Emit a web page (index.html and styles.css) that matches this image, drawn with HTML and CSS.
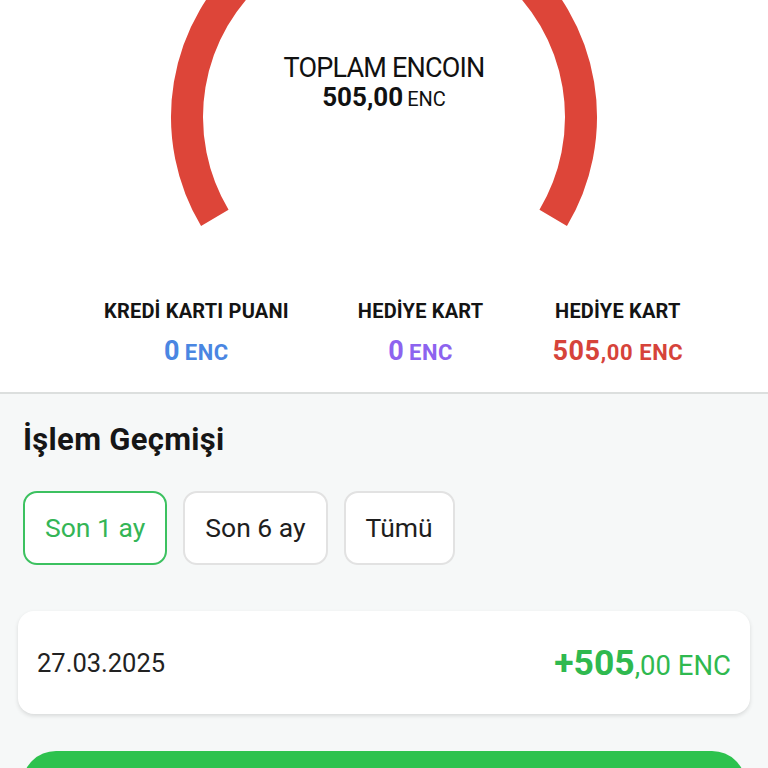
FILE: index.html
```html
<!DOCTYPE html>
<html lang="tr">
<head>
<meta charset="utf-8">
<title>Encoin</title>
<link rel="stylesheet" href="styles.css">
</head>
<body>
<div class="top">
  <div class="gauge">
    <svg class="gauge-svg" viewBox="0 0 768 240" width="768" height="240">
      <path d="M214.8 217.9 A197 197 0 1 1 553.2 217.9" fill="none" stroke="#dd4539" stroke-width="32"/>
    </svg>
    <div class="gauge-text">
      <div class="gauge-title">TOPLAM ENCOIN</div>
      <div class="gauge-value"><span class="gv-num">505,00</span> <span class="gv-unit">ENC</span></div>
    </div>
  </div>
  <div class="stats">
    <div class="stat">
      <div class="stat-label">KREDİ KARTI PUANI</div>
      <div class="stat-value blue"><span class="sv-num">0</span> <span class="sv-unit">ENC</span></div>
    </div>
    <div class="stat">
      <div class="stat-label">HEDİYE KART</div>
      <div class="stat-value purple"><span class="sv-num">0</span> <span class="sv-unit">ENC</span></div>
    </div>
    <div class="stat">
      <div class="stat-label">HEDİYE KART</div>
      <div class="stat-value red"><span class="sv-num">505</span><span class="sv-unit">,00 ENC</span></div>
    </div>
  </div>
</div>
<div class="history">
  <h2 class="history-title">İşlem Geçmişi</h2>
  <div class="chips">
    <button class="chip active">Son 1 ay</button>
    <button class="chip">Son 6 ay</button>
    <button class="chip">Tümü</button>
  </div>
  <div class="tx-card">
    <span class="tx-date">27.03.2025</span>
    <span class="tx-amount"><span class="tx-num">+505</span><span class="tx-rest">,00 ENC</span></span>
  </div>
  <div class="action-btn"></div>
</div>
</body>
</html>
```

FILE: styles.css
```css
* { box-sizing: border-box; }
html, body {
  margin: 0;
  padding: 0;
  font-family: Roboto, "Noto Sans", Arial, sans-serif;
  color: #161616;
  background: #f6f8f8;
}
body { overflow: hidden; }
.top {
  background: #fff;
  border-bottom: 2px solid #dcdfde;
  padding-bottom: 24px;
}
.gauge {
  position: relative;
  height: 300px;
}
.gauge-svg { display: block; }
.gauge-text {
  position: absolute;
  top: 52px;
  left: 0;
  right: 0;
  text-align: center;
  color: #111;
}
.gauge-title {
  font-size: 27px;
  line-height: 32px;
  font-weight: 400;
  letter-spacing: -0.8px;
}
.gauge-value {
  line-height: 31px;
}
.gv-num { font-size: 26px; font-weight: 700; line-height: 1; }
.gv-unit { font-size: 20px; font-weight: 400; line-height: 1; }
.stats {
  display: flex;
  justify-content: flex-start;
  gap: 69px;
  padding-left: 104px;
}
.stat {
  display: flex;
  flex-direction: column;
  align-items: center;
}
.stat-label {
  font-size: 20px;
  line-height: 22px;
  font-weight: 700;
  color: #141414;
  letter-spacing: 0.2px;
}
.stat-value {
  margin-top: 16px;
  height: 30px;
  line-height: 30px;
  font-weight: 700;
  letter-spacing: 0.6px;
}
.sv-num { font-size: 27px; line-height: 1; }
.sv-unit { font-size: 22px; line-height: 1; }
.blue { color: #4a86e2; }
.purple { color: #8d63ef; }
.red { color: #d6433a; }
.history {
  padding: 28px 23px 0;
}
.history-title {
  margin: 0;
  font-size: 31px;
  line-height: 36px;
  font-weight: 700;
  color: #161616;
  letter-spacing: 0.3px;
}
.chips {
  display: flex;
  gap: 16px;
  margin-top: 33px;
}
.chip {
  font-family: inherit;
  font-size: 26.5px;
  line-height: 30px;
  padding: 20px 20px;
  background: #fff;
  border: 2px solid #e2e2e2;
  border-radius: 14px;
  color: #1e1e1e;
}
.chip.active {
  border-color: #3cc160;
  color: #34b556;
}
.tx-card {
  margin: 46px -5px 0;
  height: 103px;
  background: #fff;
  border-radius: 16px;
  box-shadow: 0 2px 4px rgba(0,0,0,0.12);
  display: flex;
  align-items: center;
  justify-content: space-between;
  padding: 0 19px;
}
.tx-date {
  font-size: 25.5px;
  color: #222;
}
.tx-amount { color: #2fb94f; }
.tx-num { font-size: 35.5px; font-weight: 700; }
.tx-rest { font-size: 27.5px; }
.action-btn {
  margin: 37px -1px 0;
  height: 80px;
  background: #2dc24e;
  border-radius: 34px;
}
```
